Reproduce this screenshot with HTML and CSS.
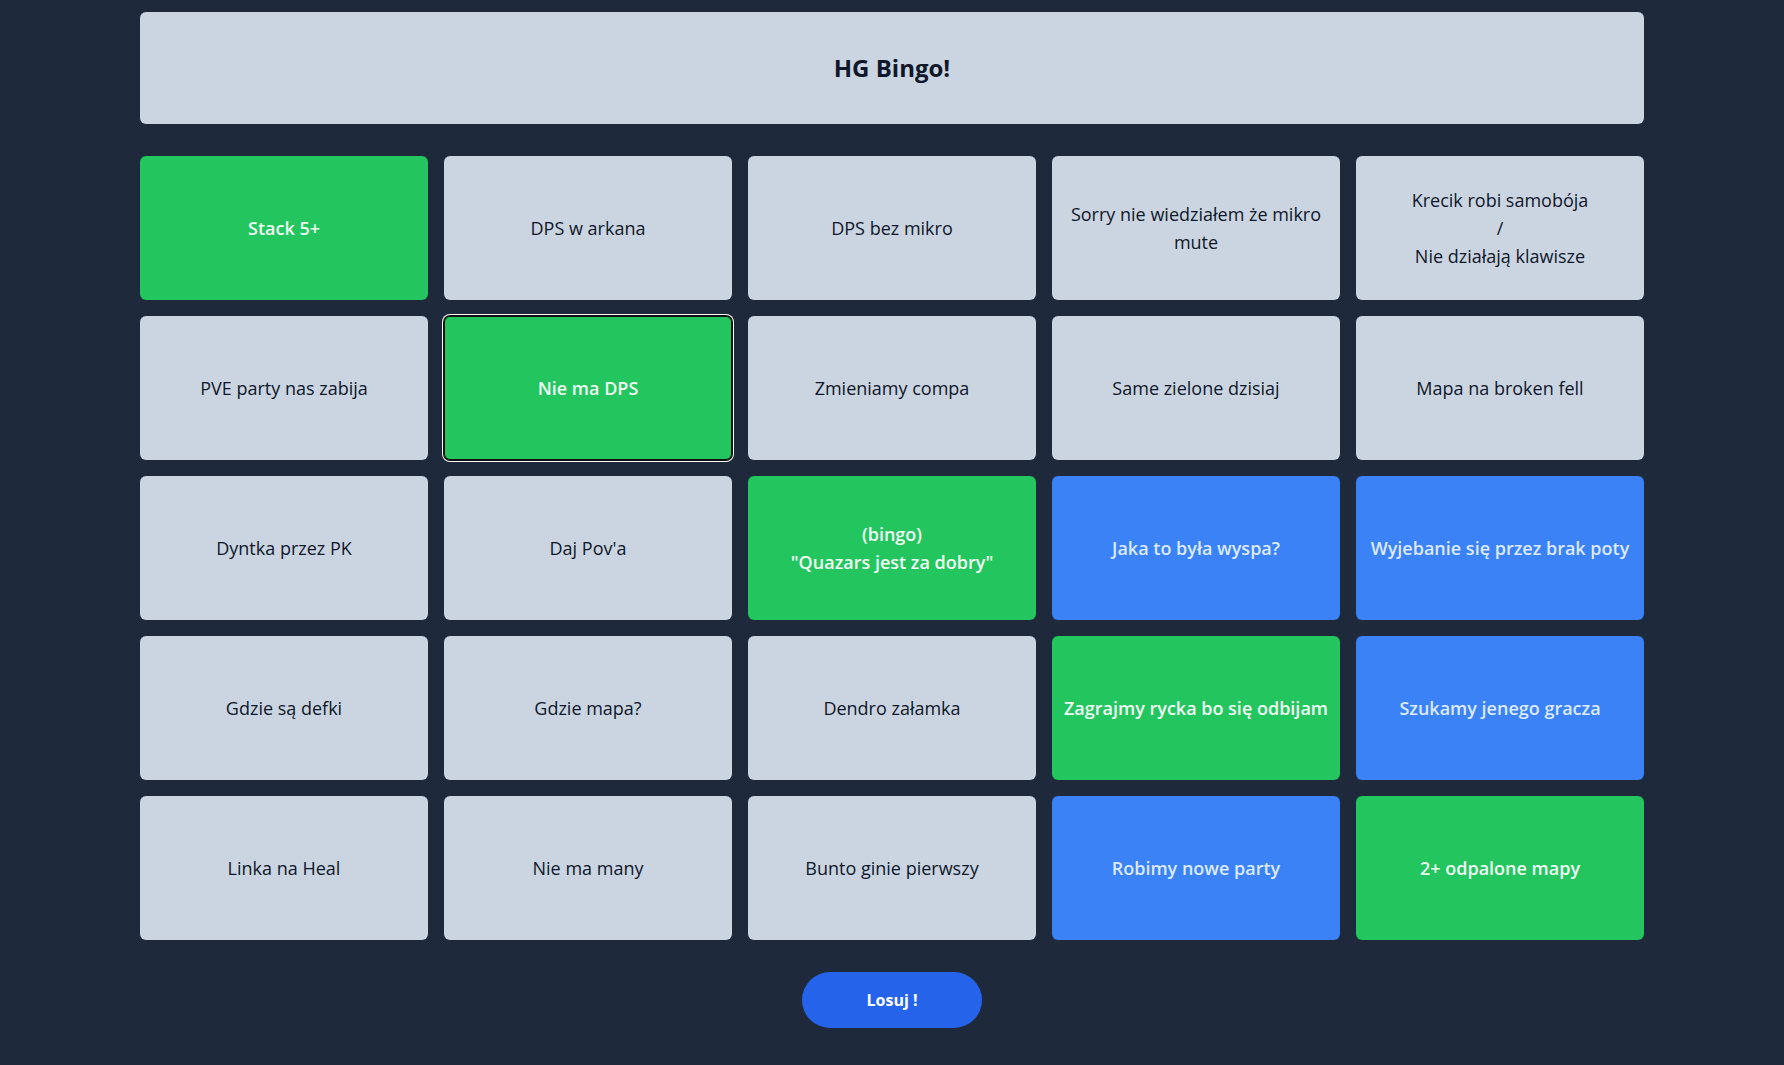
FILE: index.html
```html
<!DOCTYPE html>
<html lang="pl">
<head>
<meta charset="utf-8">
<title>HG Bingo!</title>
<link rel="stylesheet" href="styles.css">
</head>
<body>
<main class="container">
  <header class="title-box"><h1 class="title">HG Bingo!</h1></header>
  <section class="board">
    <button class="cell green">Stack 5+</button>
    <button class="cell">DPS w arkana</button>
    <button class="cell">DPS bez mikro</button>
    <button class="cell">Sorry nie wiedziałem że mikro mute</button>
    <button class="cell">Krecik robi samobója<br>/<br>Nie działają klawisze</button>

    <button class="cell">PVE party nas zabija</button>
    <button class="cell green focused">Nie ma DPS</button>
    <button class="cell">Zmieniamy compa</button>
    <button class="cell">Same zielone dzisiaj</button>
    <button class="cell">Mapa na broken fell</button>

    <button class="cell">Dyntka przez PK</button>
    <button class="cell">Daj Pov'a</button>
    <button class="cell green">(bingo)<br>"Quazars jest za dobry"</button>
    <button class="cell blue">Jaka to była wyspa?</button>
    <button class="cell blue">Wyjebanie się przez brak poty</button>

    <button class="cell">Gdzie są defki</button>
    <button class="cell">Gdzie mapa?</button>
    <button class="cell">Dendro załamka</button>
    <button class="cell green">Zagrajmy rycka bo się odbijam</button>
    <button class="cell blue">Szukamy jenego gracza</button>

    <button class="cell">Linka na Heal</button>
    <button class="cell">Nie ma many</button>
    <button class="cell">Bunto ginie pierwszy</button>
    <button class="cell blue">Robimy nowe party</button>
    <button class="cell green">2+ odpalone mapy</button>
  </section>
  <div class="actions"><button class="draw">Losuj !</button></div>
</main>
</body>
</html>
```

FILE: styles.css
```css
* { box-sizing: border-box; }
html, body { margin: 0; padding: 0; }
body {
  background: #1e293b;
  font-family: "Open Sans", "Noto Sans", "Liberation Sans", sans-serif;
  min-height: 100vh;
}
.container {
  max-width: 1536px;
  margin: 0 auto;
  padding: 12px 16px 0;
}
.title-box {
  background: #cbd5e1;
  border-radius: 6px;
  padding: 40px 0;
  text-align: center;
  margin-bottom: 32px;
}
.title {
  margin: 0;
  font-size: 24px;
  line-height: 32px;
  font-weight: 700;
  color: #0f172a;
}
.board {
  display: grid;
  grid-template-columns: repeat(5, 1fr);
  gap: 16px;
}
.cell {
  height: 144px;
  border: none;
  border-radius: 6px;
  background: #cbd5e1;
  color: #0f172a;
  font-family: inherit;
  font-size: 18px;
  line-height: 28px;
  font-weight: 400;
  display: flex;
  align-items: center;
  justify-content: center;
  text-align: center;
  padding: 0 8px;
  cursor: pointer;
}
.cell.green {
  background: #22c55e;
  color: #f0fdf4;
  font-weight: 600;
}
.cell.blue {
  background: #3b82f6;
  color: #dbeafe;
  font-weight: 600;
}
.cell.focused {
  box-shadow: inset 0 0 0 1px #101010, 0 0 0 1px #101010, 0 0 0 2px #ffffff;
}
.actions {
  display: flex;
  justify-content: center;
  margin-top: 32px;
}
.draw {
  background: #2563eb;
  color: #ffffff;
  border: none;
  border-radius: 9999px;
  padding: 16px 64px;
  font-family: inherit;
  font-size: 16px;
  line-height: 24px;
  font-weight: 700;
  cursor: pointer;
}
```
